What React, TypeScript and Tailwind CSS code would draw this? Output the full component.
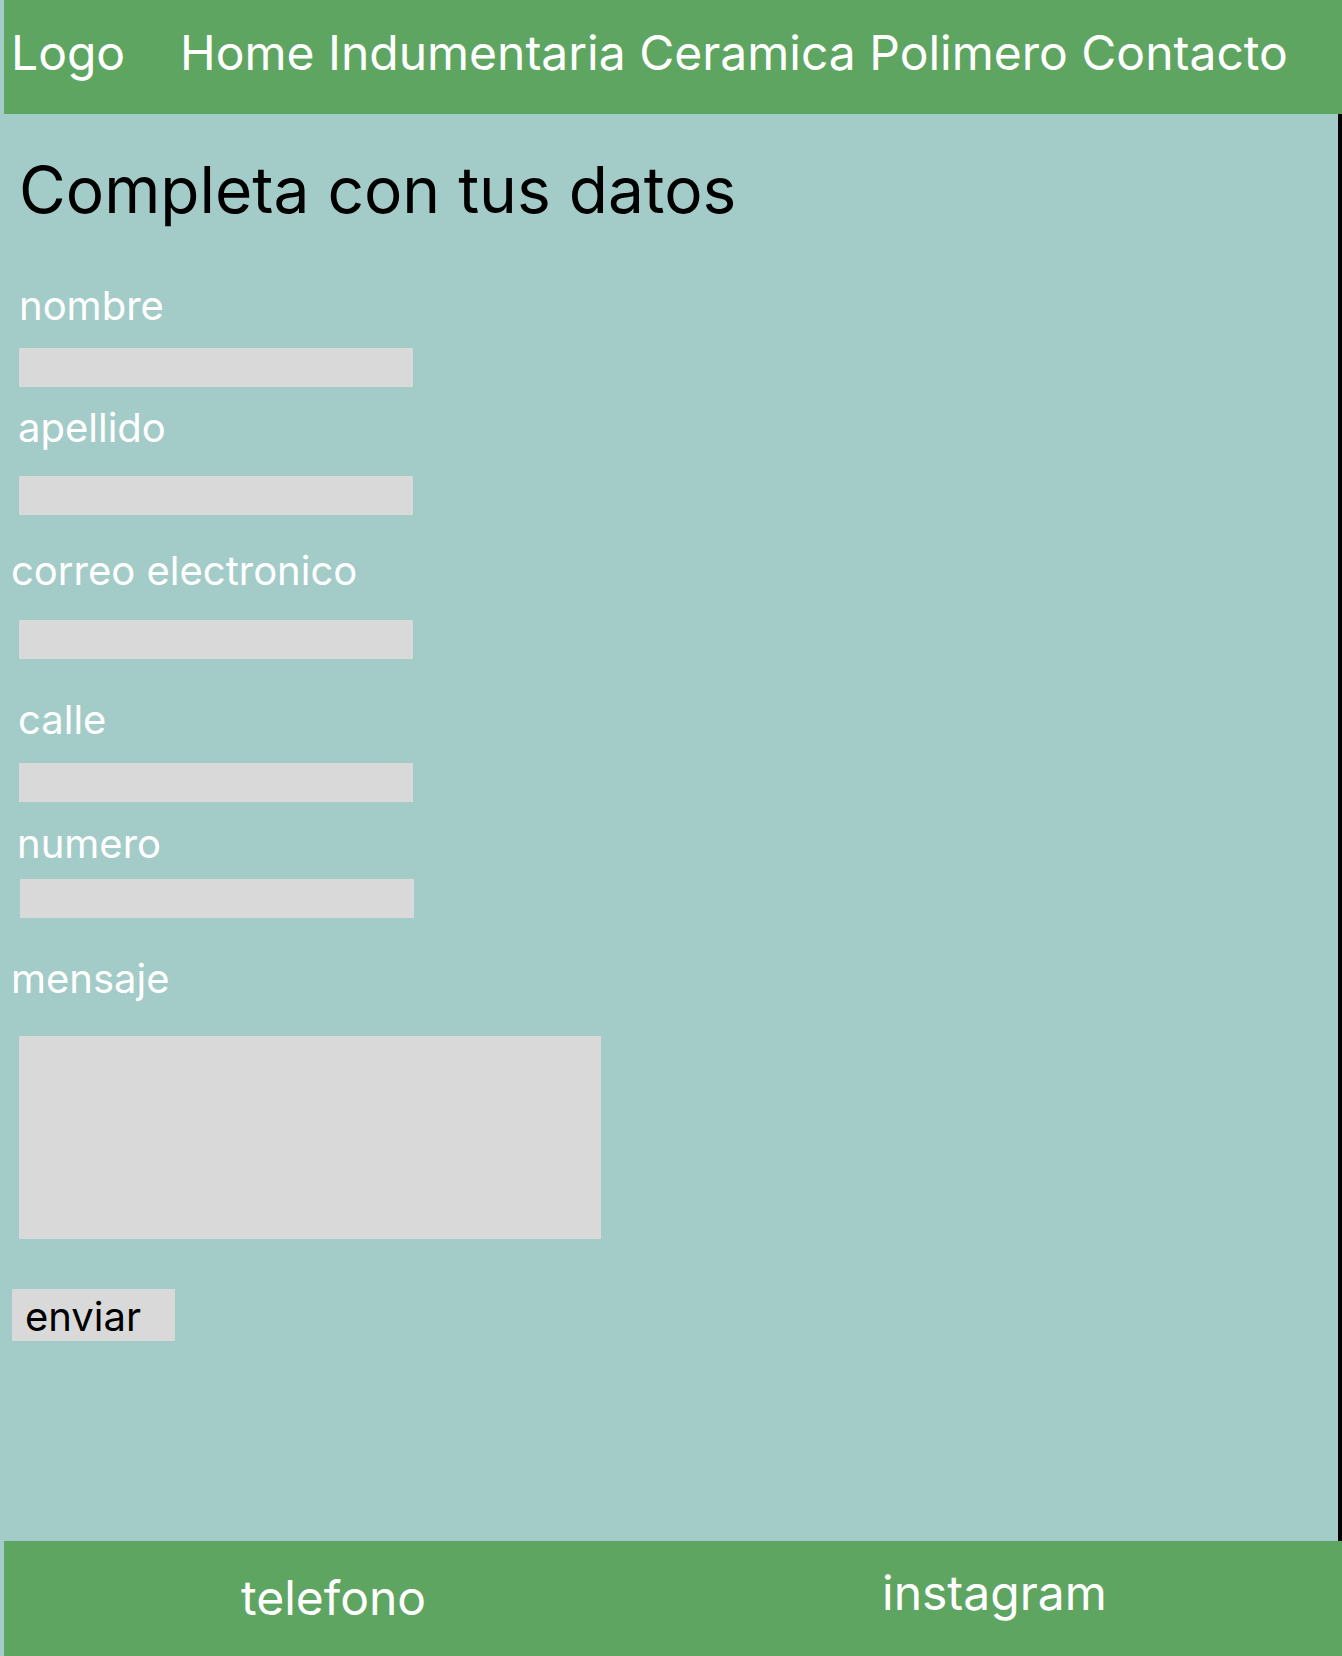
import React from 'react';

const navItems = ['Home', 'Indumentaria', 'Ceramica', 'Polimero', 'Contacto'];

const App: React.FC = () => {
  return (
    <div className="min-h-[1656px] w-[1342px] bg-[#A3CCC8] font-['Inter','Noto_Sans',sans-serif]">
      {/* header */}
      <nav className="ml-[4px] flex h-[114px] items-start overflow-hidden bg-[#5FA562] pt-[24px] pl-[7px] text-[48px] leading-[58px] text-white">
        <span className="w-[169px] shrink-0 whitespace-nowrap">Logo</span>
        <span className="shrink-0 whitespace-nowrap">{navItems.join(' ')}</span>
      </nav>

      {/* form */}
      <main className="flex h-[1427px] flex-col items-start border-r-4 border-black">
        <h1 className="mt-[37px] ml-[19px] text-[64px] leading-[77px] font-normal text-black">Completa con tus datos</h1>

        <label className="mt-[54px] ml-[19px] text-[40px] leading-[48px] text-white">nombre</label>
        <input className="mt-[18px] ml-[19px] block h-[39px] w-[394px] bg-[#D9D9D9] outline-none" />

        <label className="mt-[17px] ml-[18px] text-[40px] leading-[48px] text-white">apellido</label>
        <input className="mt-[24px] ml-[19px] block h-[39px] w-[394px] bg-[#D9D9D9] outline-none" />

        <label className="mt-[32px] ml-[11px] text-[40px] leading-[48px] text-white">correo electronico</label>
        <input className="mt-[25px] ml-[19px] block h-[39px] w-[394px] bg-[#D9D9D9] outline-none" />

        <label className="mt-[37px] ml-[18px] text-[40px] leading-[48px] text-white">calle</label>
        <input className="mt-[19px] ml-[19px] block h-[39px] w-[394px] bg-[#D9D9D9] outline-none" />

        <label className="mt-[18px] ml-[17px] text-[40px] leading-[48px] text-white">numero</label>
        <input className="mt-[11px] ml-[20px] block h-[39px] w-[394px] bg-[#D9D9D9] outline-none" />

        <label className="mt-[37px] ml-[11px] text-[40px] leading-[48px] text-white">mensaje</label>
        <textarea className="mt-[33px] ml-[19px] block h-[203px] w-[582px] resize-none bg-[#D9D9D9] outline-none" />

        <button className="mt-[50px] ml-[12px] h-[52px] w-[163px] bg-[#D9D9D9] pt-[4px] pl-[13px] text-left text-[40px] leading-[48px] text-black">
          enviar
        </button>
      </main>

      {/* footer */}
      <footer className="ml-[4px] flex h-[115px] items-start bg-[#5FA562] text-[48px] leading-[58px] text-white">
        <span className="mt-[28px] ml-[237px] w-[641px] shrink-0">telefono</span>
        <span className="mt-[23px]">instagram</span>
      </footer>
    </div>
  );
};

export default App;
